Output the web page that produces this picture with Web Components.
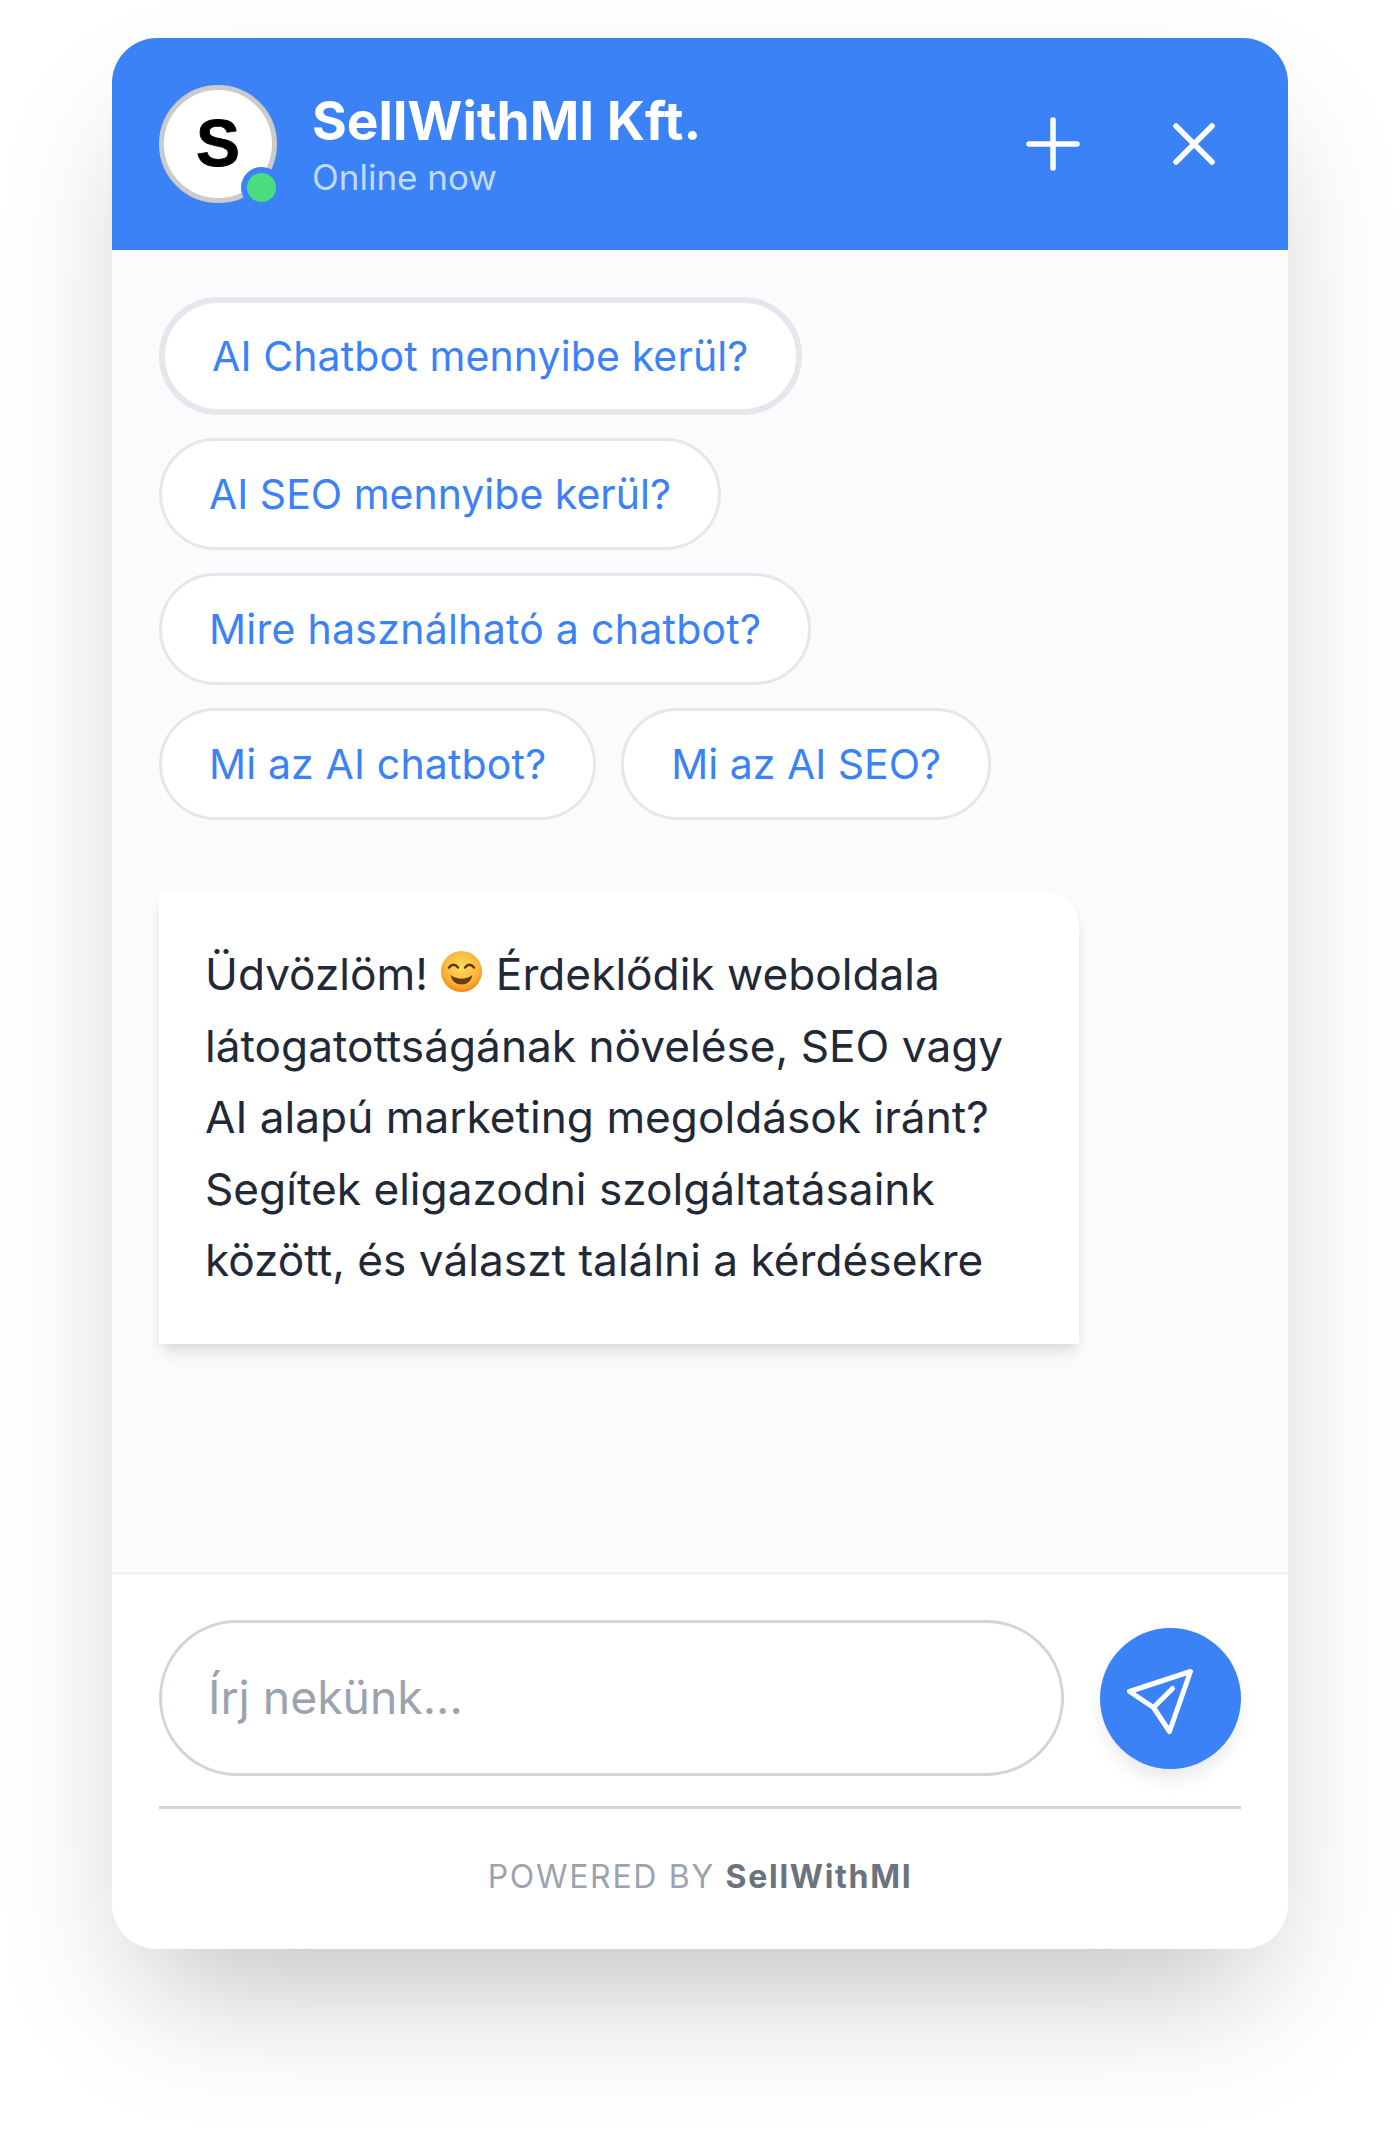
<!DOCTYPE html>
<html lang="hu">
<head>
<meta charset="utf-8">
<title>SellWithMI chat</title>
<style>
  html, body { margin: 0; background: #fff; }
  body { padding: 38px 112px 0; height: 2097px; overflow: hidden; font-family: Inter, "Liberation Sans", sans-serif; }
</style>
</head>
<body>
<chat-widget>
  <chat-header slot="header" title-text="SellWithMI Kft." status="Online now"></chat-header>
  <chat-pill slot="pills" active style="letter-spacing:.12px">AI Chatbot mennyibe kerül?</chat-pill>
  <chat-pill slot="pills">AI SEO mennyibe kerül?</chat-pill>
  <chat-pill slot="pills" style="letter-spacing:.27px">Mire használható a chatbot?</chat-pill>
  <chat-pill slot="pills" style="letter-spacing:.15px">Mi az AI chatbot?</chat-pill>
  <chat-pill slot="pills">Mi az AI SEO?</chat-pill>
  <chat-bubble slot="messages">Üdvözlöm! <chat-smile></chat-smile> Érdeklődik weboldala<br>látogatottságának növelése, SEO vagy<br>AI alapú marketing megoldások iránt?<br>Segítek eligazodni szolgáltatásaink<br>között, és választ találni a kérdésekre</chat-bubble>
  <chat-composer slot="composer" placeholder="Írj nekünk..."></chat-composer>
</chat-widget>

<script>
class ChatWidget extends HTMLElement {
  constructor() {
    super()
    this.attachShadow({mode: 'open'})
    this.shadowRoot.innerHTML = `
    <style>
      :host { display: flex; flex-direction: column; width: 1176px; height: 1911px; background: #fff; border-radius: 45px; box-shadow: 0 68px 136px -33px rgba(0,0,0,.25); overflow: hidden; }
      .body { flex: 1; background: #fafbfd; padding: 47px 47px 0; box-sizing: border-box; }
      .pills { display: flex; flex-wrap: wrap; gap: 23px 25px; width: 900px; }
      .messages { margin-top: 72px; }
    </style>
    <slot name="header"></slot>
    <div class="body">
      <div class="pills"><slot name="pills"></slot></div>
      <div class="messages"><slot name="messages"></slot></div>
    </div>
    <slot name="composer"></slot>
    `
  }
}

class ChatHeader extends HTMLElement {
  constructor() {
    super()
    this.attachShadow({mode: 'open'})
  }
  connectedCallback() {
    this.shadowRoot.innerHTML = `
    <style>
      :host { display: flex; align-items: center; flex: none; height: 212px; background: #3b82f6; padding: 0 73px 0 47px; box-sizing: border-box; color: #fff; }
      .avatar { position: relative; flex: none; width: 118px; height: 118px; box-sizing: border-box; border: 5px solid #cbcbcb; border-radius: 50%; background: #fff; display: flex; align-items: center; justify-content: center; padding-bottom: 3px; font: 700 66px "Liberation Sans", Arial, sans-serif; color: #000; -webkit-text-stroke: .8px #000; }
      .dot { position: absolute; right: -4px; bottom: -4px; width: 29px; height: 29px; border-radius: 50%; background: #4ade80; box-shadow: 0 0 0 6px #3b82f6; }
      .text { flex: 1; margin-left: 35px; padding-top: 2px; }
      .title { font-weight: 700; font-size: 53.2px; line-height: 62px; }
      .status { margin-top: 2px; font-size: 35px; line-height: 46px; color: #bfdbfe; }
      .actions { display: flex; align-items: center; gap: 93px; }
      svg { display: block; width: 54px; height: 54px; fill: none; stroke: #fff; stroke-width: 5.5; stroke-linecap: round; }
      .close { width: 42px; height: 42px; }
    </style>
    <div class="avatar">S<span class="dot"></span></div>
    <div class="text">
      <div class="title">${this.getAttribute('title-text')}</div>
      <div class="status">${this.getAttribute('status')}</div>
    </div>
    <div class="actions">
      <svg viewBox="0 0 54 54"><path d="M27 3v48M3 27h48"/></svg>
      <svg class="close" viewBox="0 0 42 42"><path d="M3 3l36 36M39 3L3 39"/></svg>
    </div>
    `
  }
}

class ChatPill extends HTMLElement {
  constructor() {
    super()
    this.attachShadow({mode: 'open'})
    this.shadowRoot.innerHTML = `
    <style>
      :host { display: inline-flex; align-items: center; height: 112px; box-sizing: border-box; padding: 0 47px; border: 3px solid #e5e7eb; border-radius: 60px; background: #fff; color: #3b82f6; font-size: 41px; white-space: nowrap; }
      :host([active]) { height: 118px; padding: 0 48px 0 47px; border-width: 6px; flex: none; }
    </style>
    <slot></slot>
    `
  }
}

class ChatBubble extends HTMLElement {
  constructor() {
    super()
    this.attachShadow({mode: 'open'})
    this.shadowRoot.innerHTML = `
    <style>
      :host { display: block; width: 920px; height: 452px; box-sizing: border-box; padding: 47px 46px 0; background: #fff; border-radius: 3px 33px 0 0; box-shadow: 0 11px 16px -3px rgba(0,0,0,.1), 0 5px 11px -3px rgba(0,0,0,.06); color: #1f2937; font-size: 44.2px; line-height: 71.5px; white-space: nowrap; }
    </style>
    <slot></slot>
    `
  }
}

class ChatSmile extends HTMLElement {
  constructor() {
    super()
    this.attachShadow({mode: 'open'})
    this.shadowRoot.innerHTML = `
    <style>
      :host { display: inline-block; width: 41px; height: 41px; vertical-align: -2px; margin: 0 1px; }
      svg { display: block; width: 100%; height: 100%; }
    </style>
    <svg viewBox="0 0 41 41">
      <defs><radialGradient id="g" cx=".5" cy=".4" r=".6"><stop offset="0" stop-color="#fddc5c"/><stop offset=".7" stop-color="#f9b53a"/><stop offset="1" stop-color="#ee8a1e"/></radialGradient></defs>
      <circle cx="20.5" cy="20.5" r="20.5" fill="url(#g)"/>
      <path d="M8 16.5q4.5-5.5 9 0M24 16.5q4.5-5.5 9 0" fill="none" stroke="#5b3413" stroke-width="2.4" stroke-linecap="round"/>
      <path d="M9.5 24q11 7.5 22 0q-2 9.5-11 9.5t-11-9.5z" fill="#6b3a12"/>
    </svg>
    `
  }
}

class ChatComposer extends HTMLElement {
  constructor() {
    super()
    this.attachShadow({mode: 'open'})
  }
  connectedCallback() {
    this.shadowRoot.innerHTML = `
    <style>
      :host { display: block; flex: none; height: 377px; box-sizing: border-box; padding: 45px 47px 0; background: #fff; border-top: 3px solid #f3f4f6; }
      .row { display: flex; align-items: center; justify-content: space-between; padding-bottom: 30px; border-bottom: 3px solid #d1d5db; }
      .input { width: 905px; height: 156px; box-sizing: border-box; border: 3px solid #d1d5db; border-radius: 78px; padding: 0 46px 2px; display: flex; align-items: center; color: #9ca3af; font-size: 46.3px; }
      .send { flex: none; width: 141px; height: 141px; border-radius: 50%; background: #3b82f6; box-shadow: 0 12px 20px -4px rgba(0,0,0,.1); display: flex; align-items: center; justify-content: center; }
      svg { display: block; width: 90px; height: 90px; fill: none; stroke: #fff; stroke-width: 5; stroke-linecap: round; stroke-linejoin: round; }
      .powered { margin-top: 48px; text-align: center; color: #9ca3af; font-size: 32px; line-height: 40px; letter-spacing: 1.7px; }
      b { color: #6b7280; font-weight: 700; }
    </style>
    <div class="row">
      <div class="input">${this.getAttribute('placeholder')}</div>
      <div class="send"><svg viewBox="0 0 90 90"><path d="M64.5 18.5L3.5 38.5 27.5 54.5 43.5 78.5z"/><path d="M27.5 54.5L46.5 35.5"/></svg></div>
    </div>
    <div class="powered">POWERED BY <b>SellWithMI</b></div>
    `
  }
}

customElements.define('chat-widget', ChatWidget)
customElements.define('chat-header', ChatHeader)
customElements.define('chat-pill', ChatPill)
customElements.define('chat-bubble', ChatBubble)
customElements.define('chat-smile', ChatSmile)
customElements.define('chat-composer', ChatComposer)
</script>
</body>
</html>
